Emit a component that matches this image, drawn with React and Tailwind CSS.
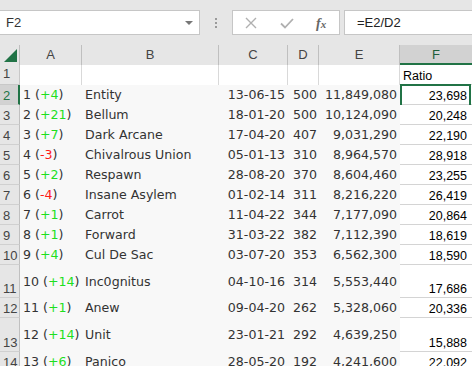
const ROWS = [
  { n: 2, rank: '1', diff: '+4', name: 'Entity', date: '13-06-15', d: '500', e: '11,849,080', f: '23,698' },
  { n: 3, rank: '2', diff: '+21', name: 'Bellum', date: '18-01-20', d: '500', e: '10,124,090', f: '20,248' },
  { n: 4, rank: '3', diff: '+7', name: 'Dark Arcane', date: '17-04-20', d: '407', e: '9,031,290', f: '22,190' },
  { n: 5, rank: '4', diff: '-3', name: 'Chivalrous Union', date: '05-01-13', d: '310', e: '8,964,570', f: '28,918' },
  { n: 6, rank: '5', diff: '+2', name: 'Respawn', date: '28-08-20', d: '370', e: '8,604,460', f: '23,255' },
  { n: 7, rank: '6', diff: '-4', name: 'Insane Asylem', date: '01-02-14', d: '311', e: '8,216,220', f: '26,419' },
  { n: 8, rank: '7', diff: '+1', name: 'Carrot', date: '11-04-22', d: '344', e: '7,177,090', f: '20,864' },
  { n: 9, rank: '8', diff: '+1', name: 'Forward', date: '31-03-22', d: '382', e: '7,112,390', f: '18,619' },
  { n: 10, rank: '9', diff: '+4', name: 'Cul De Sac', date: '03-07-20', d: '353', e: '6,562,300', f: '18,590' },
  { n: 11, rank: '10', diff: '+14', name: 'Inc0gnitus', date: '04-10-16', d: '314', e: '5,553,440', f: '17,686', tall: 'h-[33px]' },
  { n: 12, rank: '11', diff: '+1', name: 'Anew', date: '09-04-20', d: '262', e: '5,328,060', f: '20,336' },
  { n: 13, rank: '12', diff: '+14', name: 'Unit', date: '23-01-21', d: '292', e: '4,639,250', f: '15,888', tall: 'h-[34px]' },
  { n: 14, rank: '13', diff: '+6', name: 'Panico', date: '28-05-20', d: '192', e: '4,241,600', f: '22,092' },
]

const COLS = [
  { key: 'A', w: 'w-[62px]' },
  { key: 'B', w: 'w-[137px]' },
  { key: 'C', w: 'w-[69px]' },
  { key: 'D', w: 'w-[31px]' },
  { key: 'E', w: 'w-[81px]' },
]

const sans = "font-['Liberation_Sans',Arial,sans-serif]"
const verdana = "font-['DejaVu_Sans',Verdana,sans-serif]"

function Toolbar() {
  return (
    <div className={`flex h-[45px] items-start bg-[#e6e6e6] pt-[10px] ${sans}`}>
      {/* name box */}
      <div className="flex h-[25px] w-[200px] shrink-0 items-center justify-between border border-l-0 border-[#c6c6c6] bg-white pl-[6px] pr-[6px]">
        <span className="text-[13px] text-[#333]">F2</span>
        <span className="h-0 w-0 border-l-[4px] border-r-[4px] border-t-[4px] border-l-transparent border-r-transparent border-t-[#777]" />
      </div>
      <div className="flex h-[25px] w-[32px] shrink-0 flex-col items-center justify-center gap-[2px]">
        <span className="h-[2px] w-[2px] bg-[#9a9a9a]" />
        <span className="h-[2px] w-[2px] bg-[#9a9a9a]" />
        <span className="h-[2px] w-[2px] bg-[#9a9a9a]" />
      </div>
      {/* cancel / enter / fx */}
      <div className="flex h-[25px] w-[108px] shrink-0 items-center border border-[#c6c6c6] bg-white">
        <svg width="12" height="12" viewBox="0 0 12 12" className="ml-[12px]">
          <path d="M1 1 L11 11 M11 1 L1 11" stroke="#b0b0b0" strokeWidth="1.4" />
        </svg>
        <svg width="14" height="11" viewBox="0 0 14 11" className="ml-[23px] mt-[2px]">
          <path d="M1 5.5 L5 9.5 L13 1" stroke="#b0b0b0" strokeWidth="1.8" fill="none" />
        </svg>
        <span className="ml-[22px] mt-[1px] font-['Liberation_Serif',serif] text-[14px] font-bold italic text-[#666]">
          f<span className="text-[11px]">x</span>
        </span>
      </div>
      <div className="ml-[4px] flex h-[25px] flex-1 items-center border border-r-0 border-[#c6c6c6] bg-white pl-[12px]">
        <span className="text-[13px] text-[#222]">=E2/D2</span>
      </div>
    </div>
  )
}

function HeaderRow() {
  return (
    <div className={`flex h-[20px] bg-[#e6e6e6] text-[13px] text-[#444] ${sans}`}>
      <div className="relative w-[20px] shrink-0 border-r border-[#bfbfbf]">
        <svg width="13" height="13" viewBox="0 0 13 13" className="absolute left-[4px] top-[4px]">
          <path d="M13 0 L13 13 L0 13 Z" fill="#217346" />
        </svg>
      </div>
      {COLS.map((c) => (
        <div key={c.key} className={`${c.w} flex shrink-0 items-center justify-center border-r border-[#bfbfbf]`}>
          {c.key}
        </div>
      ))}
      <div className="flex w-[72px] shrink-0 items-center justify-center border-b-2 border-[#217346] bg-[#d2d2d2] pt-[1px] text-[#1e5e3a]">
        F
      </div>
    </div>
  )
}

function FirstRow() {
  return (
    <div className="flex h-[20px] bg-white">
      <div className={`flex w-[20px] shrink-0 items-end border-r border-b border-[#c8c8c8] bg-[#e6e6e6] pb-[1px] pl-[3px] text-[13px] text-[#444] ${sans}`}>
        1
      </div>
      {COLS.map((c) => (
        <div key={c.key} className={`${c.w} shrink-0 border-r border-[#d9d9d9]`} />
      ))}
      <div className={`flex w-[72px] shrink-0 items-end border-b border-[#d4d4d4] pb-[1px] pl-[3px] text-[12.5px] leading-[14px] text-black ${sans}`}>
        Ratio
      </div>
    </div>
  )
}

function DataRow({ r }) {
  const sel = r.n === 2
  const neg = r.diff.startsWith('-')
  return (
    <div className={`flex ${r.tall || 'h-[20px]'} shrink-0`}>
      <div
        className={`flex w-[20px] shrink-0 items-end border-b border-[#d0d0d0] pb-[1px] pl-[3px] text-[13px] leading-[14px] ${sans} ${
          sel ? 'border-r-2 border-r-[#217346] bg-[#d2d2d2] text-[#217346]' : 'border-r border-r-[#c0c0c0] bg-[#e6e6e6] text-[#444]'
        }`}
      >
        {r.n}
      </div>
      <div className={`flex flex-1 items-center bg-[#f8f8f8] pt-[1px] text-[12.6px] text-[#333] ${verdana}`}>
        <div className="w-[62px] shrink-0 whitespace-nowrap pl-[3px]">
          {r.rank} (<span className={neg ? 'text-[#ff1a1a]' : 'text-[#1edf1e]'}>{r.diff}</span>)
        </div>
        <div className="w-[137px] shrink-0 whitespace-nowrap pl-[3px]">{r.name}</div>
        <div className="w-[69px] shrink-0 pr-[3px] text-right">{r.date}</div>
        <div className="w-[31px] shrink-0 pr-[2px] text-right">{r.d}</div>
        <div className="w-[81px] shrink-0 pr-[3px] text-right">{r.e}</div>
      </div>
      <div
        className={`relative flex w-[72px] shrink-0 items-end justify-end border-b border-[#d4d4d4] bg-white pb-[1px] pr-[5px] text-[12.5px] leading-[14px] text-black ${sans}`}
      >
        {r.f}
        {sel && <div className="absolute -top-[1px] left-0 h-[23px] w-[71px] border-2 border-[#217346]" />}
      </div>
    </div>
  )
}

export default function App() {
  return (
    <div className="h-[366px] w-[472px] overflow-hidden bg-white">
      <Toolbar />
      <HeaderRow />
      <FirstRow />
      {ROWS.map((r) => (
        <DataRow key={r.n} r={r} />
      ))}
    </div>
  )
}
